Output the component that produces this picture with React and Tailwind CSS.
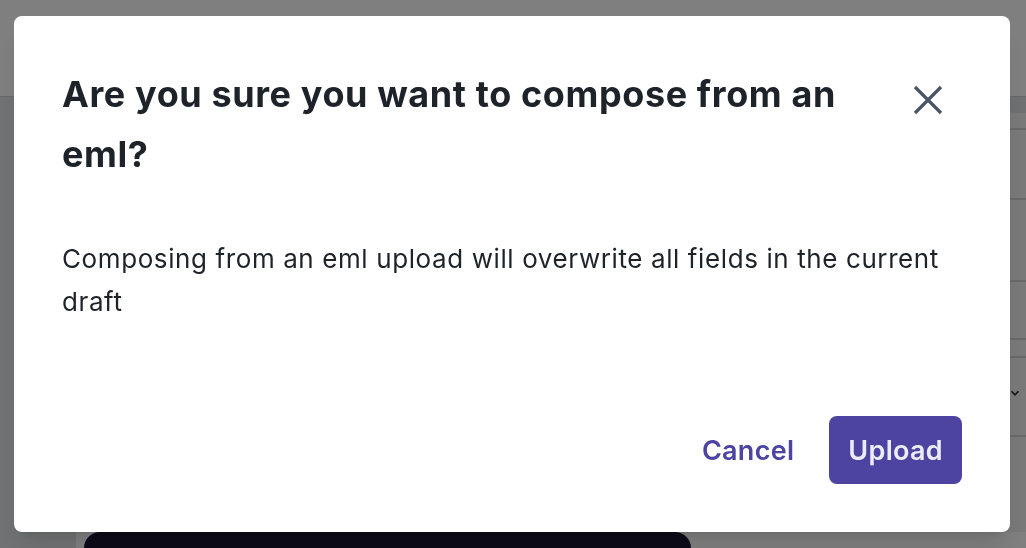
import React from "react";

const ConfirmEmlModal = () => {
  return (
    <div className="fixed inset-0 z-10 flex items-center justify-center bg-black/50">
      <div className="flex h-[516px] w-[996px] -translate-x-px flex-col rounded-lg bg-white p-12 shadow-xl">
        {/* Header */}
        <div className="flex items-start justify-between">
          <h2 className="w-[800px] text-[36px] font-bold leading-[60px] tracking-[0.6px] text-[#1e2229]">
            Are you sure you want to compose from an eml?
          </h2>
          <button className="mr-[8px] mt-[10px] text-[#4b5567]">
            <svg
              width="52"
              height="52"
              viewBox="0 0 24 24"
              fill="none"
              stroke="currentColor"
              strokeWidth="1.5"
            >
              <path d="M6 18L18 6M6 6l12 12" />
            </svg>
          </button>
        </div>

        {/* Body */}
        <p className="mt-[53px] text-[26px] leading-[43px] tracking-[0.6px] text-[#1e2229]">
          Composing from an eml upload will overwrite all fields in the current
          draft
        </p>

        {/* Buttons */}
        <div className="mt-auto flex justify-end gap-4">
          <button className="h-[68px] rounded-lg px-[19px] pt-[2px] text-[27px] font-semibold tracking-[0.3px] text-[#4c44a0]">
            Cancel
          </button>
          <button className="h-[68px] rounded-lg bg-[#4c44a0] px-[19px] pt-[2px] text-[27px] font-semibold tracking-[0.3px] text-[#ececf6]">
            Upload
          </button>
        </div>
      </div>
    </div>
  );
};

export default function App() {
  return (
    <div
      className="h-[548px] w-[1026px] overflow-hidden bg-white"
      style={{ fontFamily: "Inter, 'Noto Sans', sans-serif" }}
    >
      {/* Page behind the dialog */}
      <div className="h-[97px] border-b border-[#cfd1d4] bg-white" />
      <div className="flex h-[451px]">
        <div className="w-[76px] bg-[#e3e5e7]" />
        <div className="flex flex-1 flex-col">
          <div className="flex flex-1">
            <div className="flex-1" />
            <div className="flex w-[200px] flex-col bg-[#f3f3f3]">
              <div className="h-[16px] bg-[#dfe1e3]" />
              <div className="h-[17px] border-b-2 border-[#cfd1d4]" />
              <div className="h-[70px] border-b-2 border-[#cfd1d4]" />
              <div className="h-[82px] border-b-2 border-[#cfd1d4]" />
              <div className="h-[58px] border-b-2 border-[#cfd1d4]" />
              <div className="h-[18px] border-b-2 border-[#cfd1d4]" />
              <div className="flex h-[79px] items-center justify-end border-b-2 border-[#cfd1d4] pr-1 pb-2 text-[#2a2f3a]">
                <svg width="14" height="14" viewBox="0 0 24 24" fill="none" stroke="currentColor" strokeWidth="3">
                  <path d="M6 9l6 6 6-6" />
                </svg>
              </div>
            </div>
          </div>
          <div className="h-[16px] pl-2">
            <div className="h-[40px] w-[607px] rounded-t-2xl bg-[#16142e]" />
          </div>
        </div>
      </div>

      <ConfirmEmlModal />
    </div>
  );
}
